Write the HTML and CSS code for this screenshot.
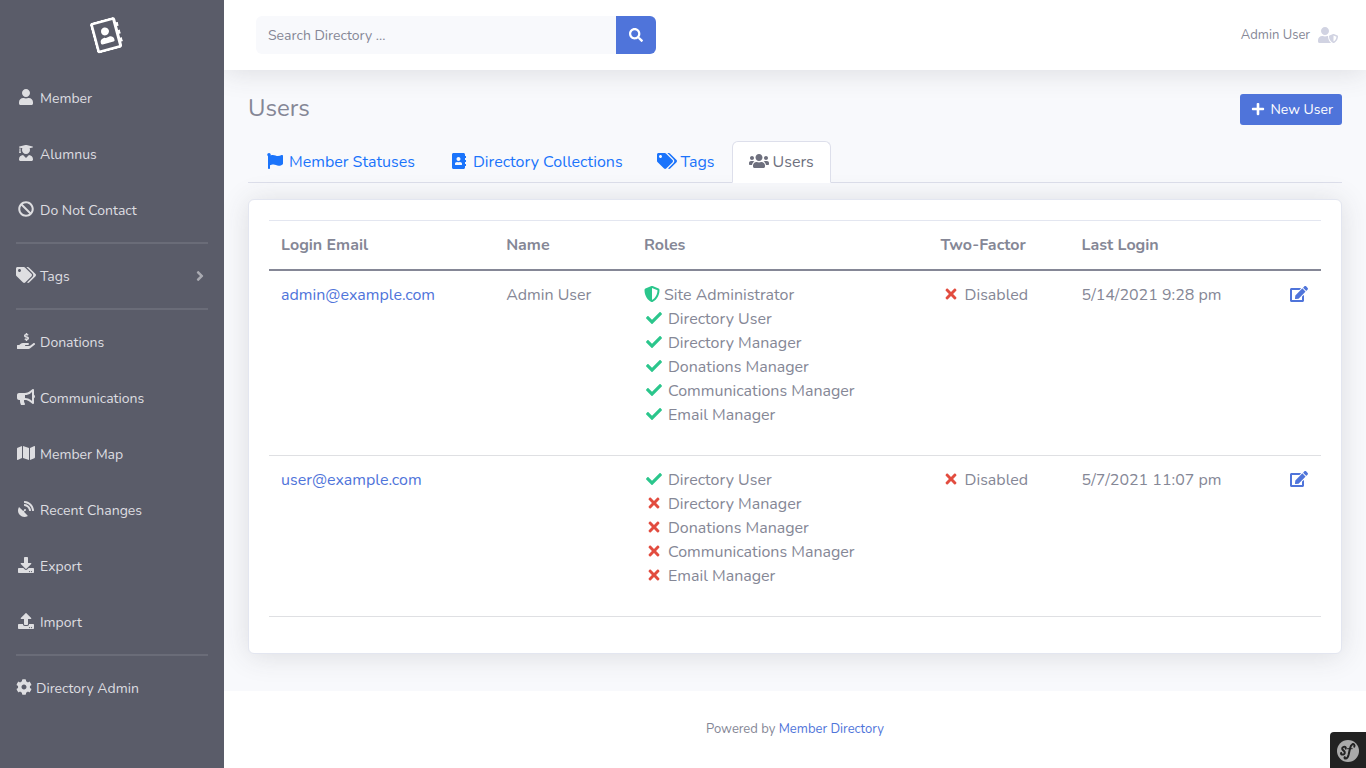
FILE: index.html
```html
<!DOCTYPE html>
<html lang="en">
<head>
<meta charset="utf-8">
<title>Users - Member Directory</title>
<link rel="stylesheet" href="styles.css">
</head>
<body>
<svg class="sprite" aria-hidden="true">
  <symbol id="user" viewBox="0 0 448 512"><path d="M224 256c70.7 0 128-57.3 128-128S294.7 0 224 0 96 57.3 96 128s57.3 128 128 128zm89.6 32h-16.7c-22.2 10.2-46.9 16-72.9 16s-50.6-5.8-72.9-16h-16.7C60.2 288 0 348.2 0 422.4V464c0 26.5 21.5 48 48 48h352c26.5 0 48-21.5 48-48v-41.6c0-74.2-60.2-134.4-134.4-134.4z"/></symbol>
  <symbol id="graduate" viewBox="0 0 448 512"><path d="M319.4 320.6L224 416l-95.4-95.4C57.1 323.7 0 382.2 0 454.4v9.6c0 26.5 21.5 48 48 48h352c26.5 0 48-21.5 48-48v-9.6c0-72.2-57.1-130.7-128.6-133.8zM13.6 79.8l6.4 1.5v58.4c-7 4.2-12 11.5-12 20.3 0 8.4 4.6 15.4 11.1 19.7L3.5 242c-1.7 6.9 2.1 14 7.6 14h41.8c5.5 0 9.3-7.1 7.6-14l-15.6-62.3C51.4 175.4 56 168.4 56 160c0-8.8-5-16.1-12-20.3V87.1l66 15.9c-8.6 17.2-14 36.4-14 57 0 70.7 57.3 128 128 128s128-57.3 128-128c0-20.6-5.3-39.8-14-57l96.3-23.2c18.2-4.4 18.2-27.1 0-31.5l-190.4-46c-13-3.1-26.7-3.1-39.7 0L13.6 48.2c-18.1 4.4-18.1 27.2 0 31.6z"/></symbol>
  <symbol id="ban" viewBox="0 0 512 512"><path d="M256 8C119.034 8 8 119.033 8 256s111.034 248 248 248 248-111.034 248-248S392.967 8 256 8zm130.108 117.892c65.448 65.448 70 165.481 20.677 235.637L150.47 105.216c70.204-49.356 170.226-44.735 235.638 20.676zM125.892 386.108c-65.448-65.448-70-165.481-20.677-235.637L361.53 406.784c-70.203 49.356-170.226 44.736-235.638-20.676z"/></symbol>
  <symbol id="tags" viewBox="0 0 640 512"><path d="M497.941 225.941L286.059 14.059A48 48 0 0 0 252.118 0H48C21.49 0 0 21.49 0 48v204.118a48 48 0 0 0 14.059 33.941l211.882 211.882c18.744 18.745 49.136 18.746 67.882 0l204.118-204.118c18.745-18.745 18.745-49.137 0-67.882zM112 160c-26.51 0-48-21.49-48-48s21.49-48 48-48 48 21.49 48 48-21.49 48-48 48zm513.941 133.823L421.823 497.941c-18.745 18.745-49.137 18.745-67.882 0l-.36-.36L527.64 323.522c16.999-16.999 26.36-39.6 26.36-63.64s-9.362-46.641-26.36-63.64L331.397 0h48.721a48 48 0 0 1 33.941 14.059l211.882 211.882c18.745 18.745 18.745 49.137 0 67.882z"/></symbol>
  <symbol id="donate" viewBox="0 0 576 512"><path d="M271.06,144.3l54.27,14.3a8.59,8.59,0,0,1,6.63,8.1c0,4.6-4.09,8.4-9.12,8.4h-35.6a30,30,0,0,1-11.19-2.2c-5.24-2.2-11.28-1.7-15.3,2l-19,17.5a11.68,11.68,0,0,0-2.25,2.66,11.42,11.42,0,0,0,3.88,15.74,83.77,83.77,0,0,0,34.51,11.5V240c0,8.8,7.83,16,17.37,16h17.37c9.55,0,17.38-7.2,17.38-16V222.4c32.93-3.6,57.84-31,53.5-63-3.15-23-22.46-41.3-46.56-47.7L282.68,97.4a8.59,8.59,0,0,1-6.63-8.1c0-4.6,4.09-8.4,9.12-8.4h35.6A30,30,0,0,1,332,83.1c5.23,2.2,11.28,1.7,15.3-2l19-17.5A11.31,11.31,0,0,0,368.47,61a11.43,11.43,0,0,0-3.84-15.78,83.82,83.82,0,0,0-34.52-11.5V16c0-8.8-7.82-16-17.37-16H295.37C285.82,0,278,7.2,278,16V33.6c-32.89,3.6-57.85,31-53.51,63C227.63,119.6,247,137.9,271.06,144.3ZM565.27,328.1c-11.8-10.7-30.2-10-42.6,0L430.27,402a63.64,63.64,0,0,1-40,14H272a16,16,0,0,1,0-32h78.29c15.9,0,30.71-10.9,33.25-26.6a31.2,31.2,0,0,0,.46-5.46A32,32,0,0,0,352,320H192a117.66,117.66,0,0,0-74.1,26.29L71.4,384H16A16,16,0,0,0,0,400v96a16,16,0,0,0,16,16H372.77a64,64,0,0,0,40-14L564,377a32,32,0,0,0,1.28-48.9Z"/></symbol>
  <symbol id="bullhorn" viewBox="0 0 576 512"><path d="M576 240c0-23.63-12.95-44.04-32-55.12V32.01C544 23.26 537.02 0 512 0c-7.12 0-14.19 2.38-19.98 7.02l-85.03 68.03C364.28 109.19 310.66 128 256 128H64c-35.35 0-64 28.65-64 64v96c0 35.35 28.65 64 64 64h33.7c-1.39 10.48-2.18 21.14-2.18 32 0 39.77 9.26 77.35 25.56 110.94 5.19 10.69 16.52 17.06 28.4 17.06h74.28c26.05 0 41.69-29.84 25.9-50.56-16.4-21.52-26.15-48.36-26.15-77.44 0-11.11 1.62-21.79 4.41-32H256c54.66 0 108.28 18.81 150.98 52.95l85.03 68.03a32.023 32.023 0 0 0 19.98 7.02c24.92 0 32-22.78 32-32V295.13C563.05 284.04 576 263.63 576 240zm-96 141.42l-33.05-26.44C392.95 311.78 325.12 288 256 288v-96c69.12 0 136.95-23.78 190.95-66.98L480 98.58v282.84z"/></symbol>
  <symbol id="map" viewBox="0 0 576 512"><path d="M0 117.66v346.32c0 11.32 11.43 19.06 21.94 14.86L160 416V32L20.12 87.95A32.006 32.006 0 0 0 0 117.66zM192 416l192 64V96L192 32v384zM554.06 33.16L416 96v384l139.88-55.95A31.996 31.996 0 0 0 576 394.34V48.02c0-11.32-11.43-19.06-21.94-14.86z"/></symbol>
  <symbol id="dish" viewBox="0 0 512 512"><path d="M305.45,462.59c7.39,7.3,6.19,20.1-3,25-77.71,41.8-176.73,29.91-242.34-35.71C-5.5,386.28-17.4,287.36,24.41,209.55c4.89-9.1,17.69-10.3,25-3L166.23,323.37l27.39-27.4c-.69-2.61-1.59-5-1.59-7.81a32,32,0,1,1,32,32c-2.8,0-5.2-.89-7.8-1.59l-27.41,27.41ZM511.98,303.07a16.1,16.1,0,0,1-16,17H463.86a15.97,15.97,0,0,1-15.89-15C440.47,175.55,336.45,70.53,207.03,63.53a15.84,15.84,0,0,1-15-15.91V16.03A16.09,16.09,0,0,1,209.03.02C372.25,8.62,503.47,139.84,511.98,303.07Zm-96.01-.3a16.21,16.21,0,0,1-16.11,17.3H367.65a16.07,16.07,0,0,1-15.9-14.71c-6.9-77.01-68.11-138.91-144.92-145.22a15.94,15.94,0,0,1-14.8-15.89V112.13a16.13,16.13,0,0,1,17.3-16.09C319.45,104.54,407.56,192.65,415.97,302.77Z"/></symbol>
  <symbol id="download" viewBox="0 0 512 512"><path d="M216 0h80c13.3 0 24 10.7 24 24v168h87.7c17.8 0 26.7 21.5 14.1 34.1L269.7 378.3c-7.5 7.5-19.8 7.5-27.3 0L90.1 226.1c-12.6-12.6-3.7-34.1 14.1-34.1H192V24c0-13.3 10.7-24 24-24zm296 376v112c0 13.3-10.7 24-24 24H24c-13.3 0-24-10.7-24-24V376c0-13.3 10.7-24 24-24h146.7l49 49c20.1 20.1 52.5 20.1 72.6 0l49-49H488c13.3 0 24 10.7 24 24zm-124 88c0-11-9-20-20-20s-20 9-20 20 9 20 20 20 20-9 20-20zm64 0c0-11-9-20-20-20s-20 9-20 20 9 20 20 20 20-9 20-20z"/></symbol>
  <symbol id="upload" viewBox="0 0 512 512"><path d="M296 384h-80c-13.3 0-24-10.7-24-24V192h-87.7c-17.8 0-26.7-21.5-14.1-34.1L242.3 5.7c7.5-7.5 19.8-7.5 27.3 0l152.2 152.2c12.6 12.6 3.7 34.1-14.1 34.1H320v168c0 13.3-10.7 24-24 24zm216-8v112c0 13.3-10.7 24-24 24H24c-13.3 0-24-10.7-24-24V376c0-13.3 10.7-24 24-24h136v8c0 30.9 25.1 56 56 56h80c30.9 0 56-25.1 56-56v-8h136c13.3 0 24 10.7 24 24zm-124 88c0-11-9-20-20-20s-20 9-20 20 9 20 20 20 20-9 20-20zm64 0c0-11-9-20-20-20s-20 9-20 20 9 20 20 20 20-9 20-20z"/></symbol>
  <symbol id="cog" viewBox="0 0 512 512"><path d="M487.4 315.7l-42.6-24.6c4.3-23.2 4.3-47 0-70.2l42.6-24.6c4.9-2.8 7.1-8.6 5.5-14-11.1-35.6-30-67.8-54.7-94.6-3.8-4.1-10-5.1-14.8-2.3L380.8 110c-17.9-15.4-38.5-27.3-60.8-35.1V25.8c0-5.6-3.9-10.5-9.4-11.7-36.7-8.2-74.3-7.8-109.2 0-5.5 1.2-9.4 6.1-9.4 11.7V75c-22.2 7.9-42.8 19.8-60.8 35.1L88.7 85.5c-4.9-2.8-11-1.9-14.8 2.3-24.7 26.7-43.6 58.9-54.7 94.6-1.7 5.4.6 11.2 5.5 14L67.3 221c-4.3 23.2-4.3 47 0 70.2l-42.6 24.6c-4.9 2.8-7.1 8.6-5.5 14 11.1 35.6 30 67.8 54.7 94.6 3.8 4.1 10 5.1 14.8 2.3l42.6-24.6c17.9 15.4 38.5 27.3 60.8 35.1v49.2c0 5.6 3.9 10.5 9.4 11.7 36.7 8.2 74.3 7.8 109.2 0 5.5-1.2 9.4-6.1 9.4-11.7v-49.2c22.2-7.9 42.8-19.8 60.8-35.1l42.6 24.6c4.9 2.8 11 1.9 14.8-2.3 24.7-26.7 43.6-58.9 54.7-94.6 1.5-5.5-.7-11.3-5.6-14.1zM256 336c-44.1 0-80-35.9-80-80s35.9-80 80-80 80 35.9 80 80-35.9 80-80 80z"/></symbol>
  <symbol id="angle" viewBox="0 0 256 512"><path d="M224.3 273l-136 136c-9.4 9.4-24.6 9.4-33.9 0l-22.6-22.6c-9.4-9.4-9.4-24.6 0-33.9l96.4-96.4-96.4-96.4c-9.4-9.4-9.4-24.6 0-33.9L54.3 103c9.4-9.4 24.6-9.4 33.9 0l136 136c9.5 9.4 9.5 24.6.1 34z"/></symbol>
  <symbol id="search" viewBox="0 0 512 512"><path d="M505 442.7L405.3 343c-4.5-4.5-10.6-7-17-7H372c27.6-35.3 44-79.7 44-128C416 93.1 322.9 0 208 0S0 93.1 0 208s93.1 208 208 208c48.3 0 92.7-16.4 128-44v16.3c0 6.4 2.5 12.5 7 17l99.7 99.7c9.4 9.4 24.6 9.4 33.9 0l28.3-28.3c9.4-9.4 9.4-24.6.1-34zM208 336c-70.7 0-128-57.2-128-128 0-70.7 57.2-128 128-128 70.7 0 128 57.2 128 128 0 70.7-57.2 128-128 128z"/></symbol>
  <symbol id="flag" viewBox="0 0 512 512"><path d="M349.565 98.783C295.978 98.783 251.721 64 184.348 64c-24.955 0-47.309 4.384-68.045 12.013a55.947 55.947 0 0 0 3.586-23.562C118.117 24.015 94.806 1.206 66.338.048 34.345-1.254 8 24.296 8 56c0 19.026 9.497 35.825 24 45.945V488c0 13.255 10.745 24 24 24h16c13.255 0 24-10.745 24-24v-94.4c28.311-12.064 63.582-22.122 114.435-22.122 53.588 0 97.844 34.783 165.217 34.783 48.169 0 86.667-16.294 122.505-40.858C506.84 359.452 512 349.571 512 339.045v-243.1c0-23.393-24.269-38.87-45.485-29.016-34.338 15.948-76.454 31.854-116.95 31.854z"/></symbol>
  <symbol id="book" viewBox="0 0 448 512"><path d="M436 160c6.6 0 12-5.4 12-12v-40c0-6.6-5.4-12-12-12h-20V48c0-26.5-21.5-48-48-48H48C21.5 0 0 21.5 0 48v416c0 26.5 21.5 48 48 48h320c26.5 0 48-21.5 48-48v-48h20c6.6 0 12-5.4 12-12v-40c0-6.6-5.4-12-12-12h-20v-64h20c6.6 0 12-5.4 12-12v-40c0-6.6-5.4-12-12-12h-20v-64h20zm-228-32c35.3 0 64 28.7 64 64s-28.7 64-64 64-64-28.7-64-64 28.7-64 64-64zm112 236.8c0 10.6-10 19.2-22.4 19.2H118.4C106 384 96 375.4 96 364.8v-19.2c0-31.8 30.1-57.6 67.2-57.6h5c12.3 5.1 25.7 8 39.8 8s27.6-2.9 39.8-8h5c37.1 0 67.2 25.8 67.2 57.6v19.2z"/></symbol>
  <symbol id="book-outline" viewBox="0 0 448 512"><path d="M436 160c6.6 0 12-5.4 12-12v-40c0-6.6-5.4-12-12-12h-20V48c0-26.5-21.5-48-48-48H48C21.5 0 0 21.5 0 48v416c0 26.5 21.5 48 48 48h320c26.5 0 48-21.5 48-48v-48h20c6.6 0 12-5.4 12-12v-40c0-6.6-5.4-12-12-12h-20v-64h20c6.6 0 12-5.4 12-12v-40c0-6.6-5.4-12-12-12h-20v-64h20zm-68 304H48V48h320v416zM208 256c35.3 0 64-28.7 64-64s-28.7-64-64-64-64 28.7-64 64 28.7 64 64 64zm-89.6 128h179.2c12.4 0 22.4-8.6 22.4-19.2v-19.2c0-31.8-30.1-57.6-67.2-57.6-10.8 0-18.7 8-44.8 8-26.9 0-33.4-8-44.8-8-37.1 0-67.2 25.8-67.2 57.6v19.2c0 10.6 10 19.2 22.4 19.2z"/></symbol>
  <symbol id="users" viewBox="0 0 640 512"><path d="M96 224c35.3 0 64-28.7 64-64s-28.7-64-64-64-64 28.7-64 64 28.7 64 64 64zm448 0c35.3 0 64-28.7 64-64s-28.7-64-64-64-64 28.7-64 64 28.7 64 64 64zm32 32h-64c-17.6 0-33.5 7.1-45.1 18.6 40.3 22.1 68.9 62 75.1 109.4h66c17.7 0 32-14.3 32-32v-32c0-35.3-28.7-64-64-64zm-256 0c61.9 0 112-50.1 112-112S381.9 32 320 32 208 82.1 208 144s50.1 112 112 112zm76.8 32h-8.3c-20.8 10-43.9 16-68.5 16s-47.6-6-68.5-16h-8.3C179.6 288 128 339.6 128 403.2V432c0 26.5 21.5 48 48 48h288c26.5 0 48-21.5 48-48v-28.8c0-63.6-51.6-115.2-115.2-115.2zm-223.7-13.4C161.5 263.1 145.6 256 128 256H64c-35.3 0-64 28.7-64 64v32c0 17.7 14.3 32 32 32h65.9c6.3-47.4 34.9-87.3 75.2-109.4z"/></symbol>
  <symbol id="user-shield" viewBox="0 0 640 512"><path d="M622.3 271.1l-115.2-45c-4.1-1.6-12.6-3.7-22.2 0l-115.2 45c-10.7 4.2-17.7 14-17.7 24.9 0 111.6 68.7 188.8 132.9 213.9 9.6 3.7 18 1.6 22.2 0C558.4 489.9 640 420.5 640 296c0-10.9-7-20.7-17.7-24.9zM496 462.4V273.3l95.5 37.3c-5.6 87.1-60.9 135.4-95.5 151.8zM224 256c70.7 0 128-57.3 128-128S294.7 0 224 0 96 57.3 96 128s57.3 128 128 128zm96 40c0-2.5.8-4.8 1.1-7.2-2.5-.1-4.9-.8-7.5-.8h-16.7c-22.2 10.2-46.9 16-72.9 16s-50.6-5.8-72.9-16h-16.7C60.2 288 0 348.2 0 422.4V464c0 26.5 21.5 48 48 48h352c6.8 0 13.3-1.5 19.2-4-54-42.9-99.2-116.7-99.2-212z"/></symbol>
  <symbol id="plus" viewBox="0 0 448 512"><path d="M416 208H272V64c0-17.67-14.33-32-32-32h-32c-17.67 0-32 14.33-32 32v144H32c-17.67 0-32 14.33-32 32v32c0 17.67 14.33 32 32 32h144v144c0 17.67 14.33 32 32 32h32c17.67 0 32-14.33 32-32V304h144c17.67 0 32-14.33 32-32v-32c0-17.67-14.33-32-32-32z"/></symbol>
  <symbol id="shield" viewBox="0 0 512 512"><path d="M466.5 83.7l-192-80a48.15 48.15 0 0 0-36.9 0l-192 80C27.7 91.1 16 108.6 16 128c0 198.5 114.5 335.7 221.5 380.3 11.8 4.9 25.1 4.9 36.9 0C360.1 472.6 496 349.3 496 128c0-19.4-11.7-36.9-29.5-44.3zM256.1 446.3l-.1-381 175.9 73.3c-3.3 151.4-82.1 261.1-175.8 307.7z"/></symbol>
  <symbol id="check" viewBox="0 0 512 512"><path d="M173.898 439.404l-166.4-166.4c-9.997-9.997-9.997-26.206 0-36.204l36.203-36.204c9.997-9.998 26.207-9.998 36.204 0L192 312.69 432.095 72.596c9.997-9.997 26.207-9.997 36.204 0l36.203 36.204c9.997 9.997 9.997 26.206 0 36.204l-294.4 294.401c-9.998 9.997-26.207 9.997-36.204-.001z"/></symbol>
  <symbol id="times" viewBox="0 0 352 512"><path d="M242.72 256l100.07-100.07c12.28-12.28 12.28-32.19 0-44.48l-22.24-22.24c-12.28-12.28-32.19-12.28-44.48 0L176 189.28 75.93 89.21c-12.28-12.28-32.19-12.28-44.48 0L9.21 111.45c-12.28 12.28-12.28 32.19 0 44.48L109.28 256 9.21 356.07c-12.28 12.28-12.28 32.19 0 44.48l22.24 22.24c12.28 12.28 32.2 12.28 44.48 0L176 322.72l100.07 100.07c12.28 12.28 32.2 12.28 44.48 0l22.24-22.24c12.28-12.28 12.28-32.19 0-44.48L242.72 256z"/></symbol>
  <symbol id="edit" viewBox="0 0 576 512"><path d="M402.6 83.2l90.2 90.2c3.8 3.8 3.8 10 0 13.8L274.4 405.6l-92.8 10.3c-12.4 1.4-22.9-9.1-21.5-21.5l10.3-92.8L388.8 83.2c3.8-3.8 10-3.8 13.8 0zm162-22.9l-48.8-48.8c-15.2-15.2-39.9-15.2-55.2 0l-35.4 35.4c-3.8 3.8-3.8 10 0 13.8l90.2 90.2c3.8 3.8 10 3.8 13.8 0l35.4-35.4c15.2-15.3 15.2-40 0-55.2zM384 346.2V448H64V128h229.8c3.2 0 6.2-1.3 8.5-3.5l40-40c7.6-7.6 2.2-20.5-8.5-20.5H48C21.5 64 0 85.5 0 112v352c0 26.5 21.5 48 48 48h352c26.5 0 48-21.5 48-48V306.2c0-10.7-12.9-16-20.5-8.5l-40 40c-2.2 2.3-3.5 5.3-3.5 8.5z"/></symbol>
</svg>

<div class="app">
  <nav class="sidebar" aria-label="Main">
    <a class="brand" href="#" aria-label="Member Directory"><svg class="brand-icon"><use href="#book-outline"/></svg></a>
    <ul class="menu">
      <li><a href="#"><svg class="icon"><use href="#user"/></svg>Member</a></li>
      <li><a href="#"><svg class="icon"><use href="#graduate"/></svg>Alumnus</a></li>
      <li><a href="#"><svg class="icon"><use href="#ban"/></svg>Do Not Contact</a></li>
    </ul>
    <hr>
    <ul class="menu">
      <li><a href="#"><svg class="icon"><use href="#tags"/></svg>Tags<svg class="icon caret"><use href="#angle"/></svg></a></li>
    </ul>
    <hr>
    <ul class="menu">
      <li><a href="#"><svg class="icon"><use href="#donate"/></svg>Donations</a></li>
      <li><a href="#"><svg class="icon"><use href="#bullhorn"/></svg>Communications</a></li>
      <li><a href="#"><svg class="icon"><use href="#map"/></svg>Member Map</a></li>
      <li><a href="#"><svg class="icon"><use href="#dish"/></svg>Recent Changes</a></li>
      <li><a href="#"><svg class="icon"><use href="#download"/></svg>Export</a></li>
      <li><a href="#"><svg class="icon"><use href="#upload"/></svg>Import</a></li>
    </ul>
    <hr>
    <ul class="menu">
      <li><a href="#"><svg class="icon square"><use href="#cog"/></svg>Directory Admin</a></li>
    </ul>
  </nav>

  <div class="page">
    <header class="topbar">
      <form class="search" role="search">
        <input type="search" placeholder="Search Directory ..." aria-label="Search Directory">
        <button type="button" aria-label="Search"><svg class="icon small"><use href="#search"/></svg></button>
      </form>
      <a class="account" href="#">Admin User<svg class="icon"><use href="#user-shield"/></svg></a>
    </header>

    <main class="content">
      <div class="heading">
        <h1>Users</h1>
        <a class="button" href="#"><svg class="icon small"><use href="#plus"/></svg>New User</a>
      </div>

      <ul class="tabs">
        <li><a href="#"><svg class="icon"><use href="#flag"/></svg>Member Statuses</a></li>
        <li><a href="#"><svg class="icon"><use href="#book"/></svg>Directory Collections</a></li>
        <li><a href="#"><svg class="icon"><use href="#tags"/></svg>Tags</a></li>
        <li><a class="active" href="#" aria-current="page"><svg class="icon"><use href="#users"/></svg>Users</a></li>
      </ul>

      <section class="card">
        <table>
          <colgroup><col class="col-email"><col class="col-name"><col class="col-roles"><col class="col-factor"><col class="col-login"><col class="col-edit"></colgroup>
          <thead>
            <tr><th>Login Email</th><th>Name</th><th>Roles</th><th>Two-Factor</th><th>Last Login</th><td></td></tr>
          </thead>
          <tbody>
            <tr>
              <td><a href="#">admin@example.com</a></td>
              <td>Admin User</td>
              <td>
                <ul class="roles">
                  <li><svg class="icon square yes"><use href="#shield"/></svg>Site Administrator</li>
                  <li><svg class="icon yes"><use href="#check"/></svg>Directory User</li>
                  <li><svg class="icon yes"><use href="#check"/></svg>Directory Manager</li>
                  <li><svg class="icon yes"><use href="#check"/></svg>Donations Manager</li>
                  <li><svg class="icon yes"><use href="#check"/></svg>Communications Manager</li>
                  <li><svg class="icon yes"><use href="#check"/></svg>Email Manager</li>
                </ul>
              </td>
              <td><span class="status"><svg class="icon no"><use href="#times"/></svg>Disabled</span></td>
              <td>5/14/2021 9:28 pm</td>
              <td><a class="edit" href="#" aria-label="Edit admin@example.com"><svg class="icon"><use href="#edit"/></svg></a></td>
            </tr>
            <tr>
              <td><a href="#">user@example.com</a></td>
              <td></td>
              <td>
                <ul class="roles">
                  <li><svg class="icon yes"><use href="#check"/></svg>Directory User</li>
                  <li><svg class="icon no"><use href="#times"/></svg>Directory Manager</li>
                  <li><svg class="icon no"><use href="#times"/></svg>Donations Manager</li>
                  <li><svg class="icon no"><use href="#times"/></svg>Communications Manager</li>
                  <li><svg class="icon no"><use href="#times"/></svg>Email Manager</li>
                </ul>
              </td>
              <td><span class="status"><svg class="icon no"><use href="#times"/></svg>Disabled</span></td>
              <td>5/7/2021 11:07 pm</td>
              <td><a class="edit" href="#" aria-label="Edit user@example.com"><svg class="icon"><use href="#edit"/></svg></a></td>
            </tr>
          </tbody>
        </table>
      </section>
    </main>

    <footer class="footer">Powered by <a href="#">Member Directory</a></footer>
  </div>
</div>

<button class="debug" type="button" aria-label="Show toolbar">
  <svg viewBox="0 0 22 22"><circle cx="11" cy="11" r="11"/><g><path d="M8.7 8.6c.5-1.4-.6-2.1-2-1.7-1.500.5-2 1.900-1 2.900l1.500 1.500c1.100 1.200.6 2.800-.9 3.200-1.500.4-2.700-.4-2.200-1.500"/><path d="M17.300 6.600c.8-1.500-.5-2.900-2-2.300-1.300.6-1.900 2.200-2.300 4.200l-1.400 6.300c-.6 2.400-1.500 3.700-2.900 3.800-1 .1-1.600-.8-.9-1.500"/><path d="M10.500 8.700h4.700" class="bar"/></g></svg>
</button>
</body>
</html>
```

FILE: styles.css
```css
*, *::before, *::after { box-sizing: border-box; }

:root {
  --primary: #4f74da;
  --text: #858796;
  --line: #dddfeb;
}

body {
  margin: 0;
  color: var(--text);
  background: #f8f9fc;
  font: 16px/24px Nunito, "Open Sans", sans-serif;
}

a { color: var(--primary); text-decoration: none; }
ul { margin: 0; padding: 0; list-style: none; }

.sprite { position: absolute; width: 0; height: 0; }
.icon { flex: none; width: 20px; height: 16px; margin: 0 4px 2px 0; fill: currentColor; }
.icon.square { width: 16px; }
.icon.small { width: 14px; height: 14px; }

.app { display: flex; min-height: 100vh; }

.sidebar { position: relative; z-index: 1; flex: none; width: 224px; background: #5a5c69; }
.brand { display: flex; align-items: center; justify-content: center; height: 70px; padding-right: 10px; }
.brand-icon { width: 28px; height: 32px; fill: #fff; transform: rotate(-15deg); }
.menu a {
  display: flex;
  align-items: center;
  height: 56px;
  padding: 2px 16px 0;
  color: #dedee1;
  font-size: 14px;
}
.menu .icon { margin-bottom: 4px; }
.menu .caret { width: 16px; margin: 0 0 2px auto; opacity: .6; }
.sidebar hr { height: 2px; margin: 4px 16px; border: 0; background: #6a6c78; }

.page { display: flex; flex: 1; flex-direction: column; min-width: 0; }

.topbar {
  display: flex;
  align-items: center;
  justify-content: space-between;
  height: 70px;
  padding: 0 28px 0 32px;
  background: #fff;
  box-shadow: 0 2px 28px rgba(58, 59, 69, .15);
}
.search { display: flex; width: 400px; height: 38px; }
.search input {
  flex: 1;
  min-width: 0;
  padding: 2px 12px 0;
  border: 0;
  border-radius: 6px 0 0 6px;
  color: var(--text);
  background: #f8f9fc;
  font: inherit;
  font-size: 14px;
}
.search input::placeholder { color: var(--text); opacity: 1; }
.search button {
  display: flex;
  align-items: center;
  justify-content: center;
  width: 40px;
  padding: 0;
  border: 0;
  border-radius: 0 6px 6px 0;
  color: #fff;
  background: var(--primary);
}
.search .icon { margin: 0; }
.account { display: flex; align-items: center; gap: 8px; color: var(--text); font-size: 13px; }
.account .icon { margin: 0; color: #d1d3e2; }

.content { flex: 1; padding: 24px 24px 36px; }
.heading { display: flex; align-items: flex-start; justify-content: space-between; margin-bottom: 16px; }
h1 { margin: 0; font-size: 24px; font-weight: 400; line-height: 28px; }
.button {
  display: flex;
  align-items: center;
  gap: 2px;
  height: 31px;
  padding: 0 9px 0 11px;
  border-radius: 3px;
  color: #fff;
  background: var(--primary);
  font-size: 14px;
}

.tabs { display: flex; margin-bottom: 16px; border-bottom: 1px solid var(--line); }
.tabs a {
  display: flex;
  align-items: center;
  margin-bottom: -1px;
  padding: 8px 16px;
  border: 1px solid transparent;
  border-radius: 6px 6px 0 0;
  color: #1b74fb;
}
.tabs .active { border-color: var(--line) var(--line) #fff; color: #6e707e; background: #fff; }

.card {
  padding: 20px 20px 36px;
  border: 1px solid #e3e6f0;
  border-radius: 6px;
  background: #fff;
  box-shadow: 0 2px 28px rgba(58, 59, 69, .15);
}
table { width: 100%; table-layout: fixed; border-collapse: collapse; border-bottom: 1px solid #dfe0e3; }
.col-email { width: 21.4%; }
.col-name { width: 13.1%; }
.col-roles { width: 28.2%; }
.col-factor { width: 13.4%; }
.col-edit { width: 5%; }
th, td { padding: 12px; border-top: 1px solid #dfe0e3; text-align: left; vertical-align: top; }
td:last-child { padding-right: 13px; }
thead th, thead td { border-top-color: #e3e6f0; border-bottom: 2px solid var(--text); }
th { font-weight: 700; }
.roles { margin-bottom: 16px; }
.roles li, .status { display: flex; align-items: center; }
.yes { color: #2bc68c; }
.no { color: #e24c3f; }
.edit { display: flex; align-items: center; justify-content: flex-end; height: 24px; }
.edit .icon { width: 18px; margin-right: 0; }

.footer { padding: 24px; background: #fff; font-size: 13px; line-height: 29px; text-align: center; }

.debug {
  position: fixed;
  right: 0;
  bottom: 0;
  display: flex;
  align-items: center;
  justify-content: center;
  width: 36px;
  height: 36px;
  padding: 2px 0 0;
  border: 0;
  border-radius: 4px 0 0;
  background: #222;
}
.debug svg { width: 22px; height: 22px; fill: #aaa; }
.debug path { fill: none; stroke: #222; stroke-width: 2; stroke-linecap: round; }
.debug .bar { stroke-width: 1; }
```
